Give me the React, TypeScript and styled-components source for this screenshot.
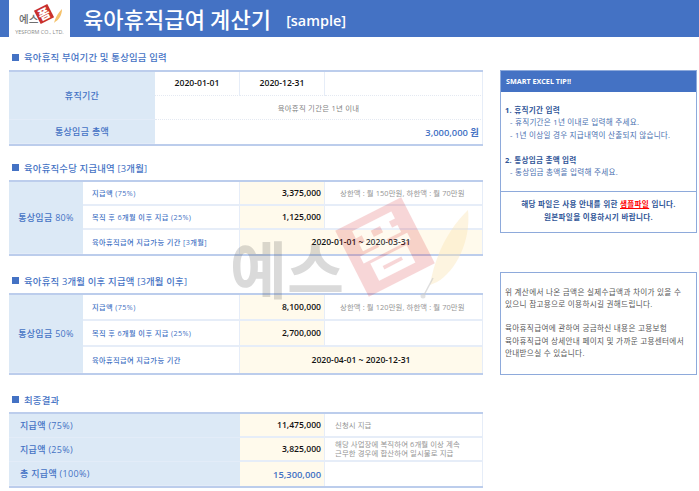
import React from "react";
import styled, { createGlobalStyle } from "styled-components";

const Global = createGlobalStyle`
  html, body { margin: 0; padding: 0; background: #fff; }
  body { width: 699px; height: 491px; overflow: hidden; font-family: "Open Sans", "Noto Sans CJK KR", sans-serif; }
  * { box-sizing: border-box; }
`;

const Page = styled.div`
  position: relative;
  width: 699px;
  height: 491px;
  overflow: hidden;
`;
const Header = styled.header`
  height: 36.5px;
  background: #4472c4;
  padding-left: 9px;
  display: flex;
  align-items: stretch;
`;
const LogoBox = styled.div`
  width: 61px;
  background: #fff;
  display: flex;
  flex-direction: column;
  align-items: center;
`;
const LogoMark = styled.svg`
  width: 61px;
  height: 27px;
  margin-top: 2px;
`;
const LogoCaption = styled.div`
  font-size: 5.4px;
  line-height: 7px;
  color: #8a8a8a;
  white-space: nowrap;
`;
const Title = styled.h1`
  margin: 0 0 0 13px;
  font-size: 22px;
  line-height: 36px;
  font-weight: 500;
  color: #fff;
  letter-spacing: 0.1px;
  font-family: "Noto Sans CJK KR", sans-serif;
`;
const Sample = styled.span`
  margin-left: 15px;
  margin-top: 11px;
  font-size: 14.4px;
  line-height: 19px;
  font-weight: 600;
  color: #fff;
`;
const Main = styled.main`
  display: flex;
  gap: 17px;
  padding: 9px 0 0 9px;
`;
const LeftCol = styled.div`
  width: 474px;
  flex: none;
`;
const RightCol = styled.aside`
  width: 197px;
  flex: none;
  padding-top: 24px;
`;
const Heading = styled.h2<{ $top: number }>`
  margin: ${(p) => p.$top}px 0 0;
  height: 24px;
  padding: 0 0 1px 3px;
  display: flex;
  align-items: center;
  gap: 5px;
  font-size: 9.4px;
  font-weight: 500;
  color: #4472c4;
  letter-spacing: 0.2px;
  white-space: nowrap;
`;
const Square = styled.i`
  width: 7px;
  height: 7px;
  background: #4472c4;
`;
const Table = styled.div<{ $cols: string; $row: number }>`
  display: grid;
  grid-template-columns: ${(p) => p.$cols};
  grid-auto-rows: ${(p) => p.$row}px;
  border-top: 2px solid #bccdec;
  border-bottom: 2px solid #bccdec;
`;
const Label = styled.div<{ $rows?: number; $left?: boolean }>`
  grid-row: span ${(p) => p.$rows ?? 1};
  background: #dce9f6;
  color: #4472c4;
  font-size: 9px;
  font-weight: 500;
  display: flex;
  align-items: center;
  justify-content: ${(p) => (p.$left ? "flex-start" : "center")};
  padding-left: ${(p) => (p.$left ? 11 : 0)}px;
  border-bottom: 1px solid #e3ecf8;
  &:last-child { border-bottom: 0; }
  letter-spacing: 0.3px;
`;
const Cell = styled.div<{ $span?: number; $cream?: boolean; $line?: string }>`
  grid-column: span ${(p) => p.$span ?? 1};
  background: ${(p) => (p.$cream ? "#fffaec" : "transparent")};
  border-bottom: ${(p) => p.$line ?? "2px solid #e6edf8"};
  border-right: 1px solid #e6edf8;
  display: flex;
  align-items: center;
  min-width: 0;
  &[data-last="true"] { border-bottom: 0; }
`;
const DateCell = styled(Cell)`
  justify-content: center;
  font-size: 8.6px;
  font-weight: 600;
  color: #111;
`;
const Note = styled(Cell)`
  justify-content: center;
  font-size: 7.4px;
  color: #7f7f7f;
  letter-spacing: 0.25px;
`;
const Amount = styled(Cell)<{ $blue?: boolean }>`
  justify-content: flex-end;
  padding-right: 3px;
  font-size: ${(p) => (p.$blue ? 9.4 : 8.6)}px;
  font-weight: 600;
  color: ${(p) => (p.$blue ? "#4472c4" : "#111")};
`;
const Sub = styled(Cell)`
  padding-left: 9px;
  font-size: 7.2px;
  font-weight: 500;
  color: #4472c4;
  letter-spacing: 0.4px;
  white-space: nowrap;
`;
const Hint = styled(Cell)<{ $indent: number }>`
  padding-left: ${(p) => p.$indent}px;
  font-size: 7.4px;
  color: #959595;
  line-height: 9px;
  white-space: nowrap;
  letter-spacing: 0.1px;
`;
const TipBox = styled.section`
  border: 1.5px solid #8eaadb;
  height: 163px;
  display: flex;
  flex-direction: column;
`;
const TipHead = styled.div`
  height: 21px;
  background: #4472c4;
  color: #fff;
  font-size: 7.2px;
  font-weight: 700;
  padding-left: 5px;
  display: flex;
  align-items: center;
`;
const TipBody = styled.div`
  flex: 1;
  padding: 12px 4px 0;
  font-size: 7.6px;
  line-height: 12.5px;
  color: #2f5597;
  letter-spacing: 0.25px;
`;
const TipTitle = styled.div<{ $gap?: boolean }>`
  font-weight: 700;
  margin-top: ${(p) => (p.$gap ? 12.5 : 0)}px;
`;
const TipLine = styled.div`
  padding-left: 5px;
  color: #4a70b0;
  white-space: nowrap;
`;
const TipFoot = styled.div`
  height: 41px;
  border-top: 1px solid #8eaadb;
  font-size: 7.6px;
  line-height: 13px;
  font-weight: 700;
  color: #2f5597;
  text-align: center;
  padding-top: 6px;
  letter-spacing: 0.3px;
`;
const SampleLink = styled.span`
  color: #ff0000;
  text-decoration: underline;
`;
const InfoBox = styled.section`
  margin-top: 39px;
  height: 103.5px;
  border: 1.5px solid #8eaadb;
  padding: 13px 4px 0;
  font-size: 7.6px;
  line-height: 12.6px;
  color: #595959;
  letter-spacing: 0.3px;
  white-space: nowrap;
`;
const Blank = styled.div`
  height: 11.5px;
`;
const Watermark = styled.svg`
  position: absolute;
  left: 225px;
  top: 190px;
  width: 260px;
  height: 135px;
  pointer-events: none;
`;

function Stamp({ cx, cy, size, fill, glyph }: { cx: number; cy: number; size: number; fill: string; glyph: string }) {
  return (
    <g transform={`rotate(-27 ${cx} ${cy})`}>
      <rect x={cx - size / 2} y={cy - size / 2} width={size} height={size} fill={fill} />
      <text
        x={cx}
        y={cy + size * 0.3}
        textAnchor="middle"
        fontSize={size * 0.84}
        fontWeight={900}
        fontFamily="Noto Sans CJK KR"
        fill={glyph}
      >
        폼
      </text>
    </g>
  );
}

const Section1 = () => (
  <>
    <Heading $top={0}><Square />육아휴직 부여기간 및 통상임금 입력</Heading>
    <Table $cols="146px 85px 85px 158px" $row={24}>
      <Label $rows={2}>휴직기간</Label>
      <DateCell $line="1px dotted #e4e9f2">2020-01-01</DateCell>
      <DateCell $line="1px dotted #e4e9f2">2020-12-31</DateCell>
      <Cell $line="1px dotted #e4e9f2" />
      <Note $span={3} $line="1px dotted #e4e9f2">육아휴직 기간은 1년 이내</Note>
      <Label>통상임금 총액</Label>
      <Amount $span={3} $blue data-last="true">3,000,000 원</Amount>
    </Table>
  </>
);

const Section2 = () => (
  <>
    <Heading $top={10.5}><Square />육아휴직수당 지급내역 [3개월]</Heading>
    <Table $cols="74px 157px 85px 158px" $row={24}>
      <Label $rows={3}>통상임금 80%</Label>
      <Sub>지급액 (75%)</Sub>
      <Amount $cream>3,375,000</Amount>
      <Hint $indent={15}>상한액 : 월 150만원, 하한액 : 월 70만원</Hint>
      <Sub>복직 후 6개월 이후 지급 (25%)</Sub>
      <Amount $cream>1,125,000</Amount>
      <Cell />
      <Sub data-last="true">육아휴직급여 지급가능 기간 [3개월]</Sub>
      <DateCell $span={2} $cream data-last="true">2020-01-01 ~ 2020-03-31</DateCell>
    </Table>
  </>
);

const Section3 = () => (
  <>
    <Heading $top={13}><Square />육아휴직 3개월 이후 지급액 [3개월 이후]</Heading>
    <Table $cols="74px 157px 85px 158px" $row={26}>
      <Label $rows={3}>통상임금 50%</Label>
      <Sub>지급액 (75%)</Sub>
      <Amount $cream>8,100,000</Amount>
      <Hint $indent={15}>상한액 : 월 120만원, 하한액 : 월 70만원</Hint>
      <Sub>복직 후 6개월 이후 지급 (25%)</Sub>
      <Amount $cream>2,700,000</Amount>
      <Cell />
      <Sub data-last="true">육아휴직급여 지급가능 기간</Sub>
      <DateCell $span={2} $cream data-last="true">2020-04-01 ~ 2020-12-31</DateCell>
    </Table>
  </>
);

const Section4 = () => (
  <>
    <Heading $top={13}><Square />최종결과</Heading>
    <Table $cols="231px 85px 158px" $row={24}>
      <Label $left>지급액 (75%)</Label>
      <Amount $cream>11,475,000</Amount>
      <Hint $indent={10}>신청시 지급</Hint>
      <Label $left>지급액 (25%)</Label>
      <Amount $cream>3,825,000</Amount>
      <Hint $indent={10}><span>해당 사업장에 복직하여 6개월 이상 계속<br />근무한 경우에 합산하여 일시불로 지급</span></Hint>
      <Label $left>총 지급액 (100%)</Label>
      <Amount $cream $blue data-last="true">15,300,000</Amount>
      <Cell data-last="true" />
    </Table>
  </>
);

export default function App() {
  return (
    <Page>
      <Global />
      <Header>
        <LogoBox>
          <LogoMark viewBox="0 0 61 27">
            <text x="10" y="21" fontSize="10.5" fontWeight="500" fontFamily="Noto Sans CJK KR" fill="#6f6f6f">예스</text>
            <Stamp cx={35} cy={12} size={15} fill="#c9302c" glyph="#fff" />
            <path d="M45 21 C47 14 50 10 53 7 C53 13 50 18 46 20 Z" fill="#f5c26b" />
          </LogoMark>
          <LogoCaption>YESFORM CO., LTD.</LogoCaption>
        </LogoBox>
        <Title>육아휴직급여 계산기</Title>
        <Sample>[sample]</Sample>
      </Header>
      <Main>
        <LeftCol>
          <Section1 />
          <Section2 />
          <Section3 />
          <Section4 />
        </LeftCol>
        <RightCol>
          <TipBox>
            <TipHead>SMART EXCEL TIP!!</TipHead>
            <TipBody>
              <TipTitle>1. 휴직기간 입력</TipTitle>
              <TipLine>- 휴직기간은 1년 이내로 입력해 주세요.</TipLine>
              <TipLine>- 1년 이상일 경우 지급내역이 산출되지 않습니다.</TipLine>
              <TipTitle $gap>2. 통상임금 총액 입력</TipTitle>
              <TipLine>- 통상임금 총액을 입력해 주세요.</TipLine>
            </TipBody>
            <TipFoot>
              해당 파일은 사용 안내를 위한 <SampleLink>샘플파일</SampleLink> 입니다.<br />
              원본파일을 이용하시기 바랍니다.
            </TipFoot>
          </TipBox>
          <InfoBox>
            위 계산에서 나온 금액은 실제수급액과 차이가 있을 수<br />
            있으니 참고용으로 이용하시길 권해드립니다.
            <Blank />
            육아휴직급여에 관하여 궁금하신 내용은 고용보험<br />
            육아휴직급여 상세안내 페이지 및 가까운 고용센터에서<br />
            안내받으실 수 있습니다.
          </InfoBox>
        </RightCol>
      </Main>
      <Watermark viewBox="0 0 260 135">
        <g opacity="0.22">
          <text x="5" y="104" fontSize="62" fontWeight="700" fontFamily="Noto Sans CJK KR" fill="#5a5a5a">예스</text>
        </g>
        <g opacity="0.18">
          <Stamp cx={160} cy={57} size={74} fill="#d8232a" glyph="#fff" />
        </g>
        <path d="M205 95 C210 65 224 38 243 20 C246 50 232 80 212 92 Z" fill="#fbe3b2" opacity="0.4" />
        <path d="M208 88 L199 105" stroke="#c9c9c9" strokeWidth="1.5" opacity="0.6" />
        <circle cx="198" cy="106" r="2.5" fill="#cfcfcf" opacity="0.6" />
      </Watermark>
    </Page>
  );
}
